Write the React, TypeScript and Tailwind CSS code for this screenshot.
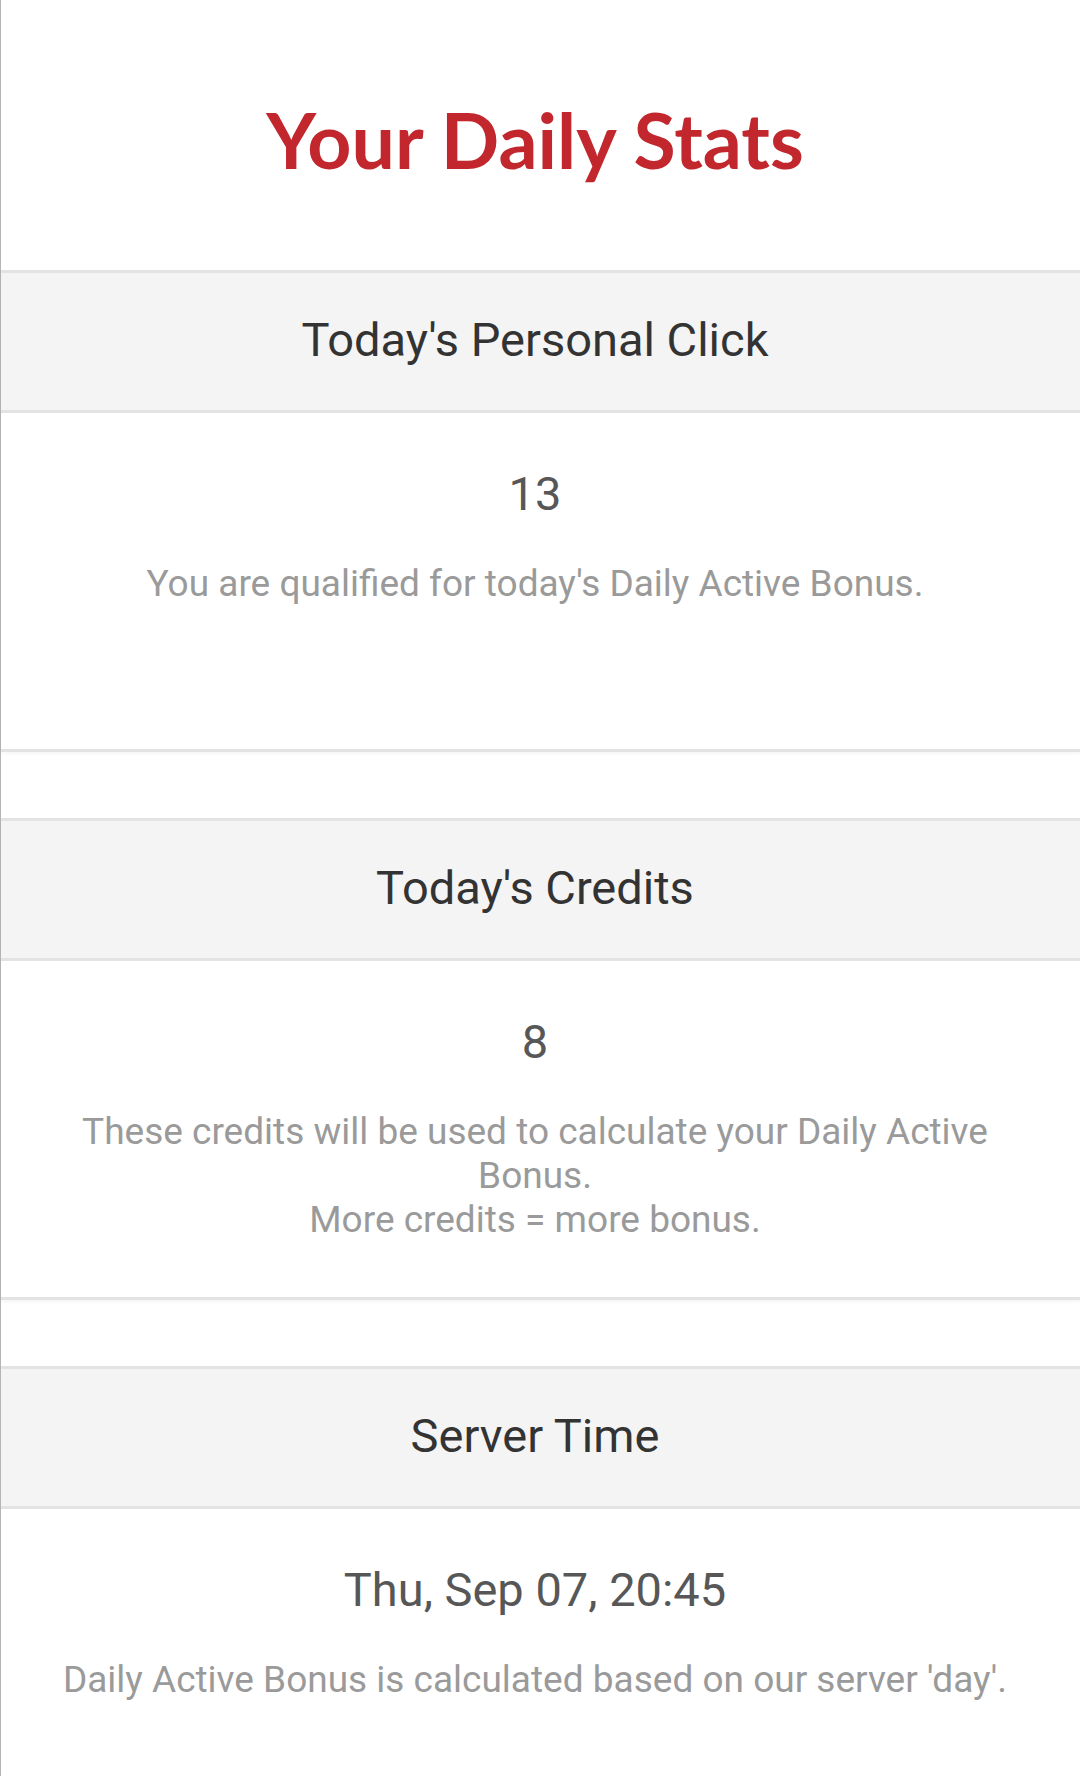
import React from "react";

function Card({ title, value, children, bodyClass }: { title: string; value: string; children: React.ReactNode; bodyClass: string }) {
  return (
    <div className="w-full">
      <div className="border-t-[3px] border-b-[3px] border-[#e3e3e3] bg-[#f4f4f4] pt-[38px] pb-[42px] pr-[11px] text-center text-[47px] leading-[57px] text-[#333333]">
        {title}
      </div>
      <div className={`bg-white pt-[55px] pr-[11px] text-center ${bodyClass}`}>
        <div className="text-[47px] leading-[52px] text-[#575757]">{value}</div>
        <div className="mt-[42px] px-[50px] text-[37px] leading-[44px] text-[#9a9a9a]">{children}</div>
      </div>
    </div>
  );
}

export default function App() {
  return (
    <div className="min-h-[1776px] w-[1080px] border-l border-[#b5b5b5] bg-white" style={{ fontFamily: "Roboto, 'Noto Sans', sans-serif" }}>
      <div className="pt-[92px] pb-[84px] pr-[11px] text-center">
        <h1 className="text-[77px] leading-[94px] font-bold text-[#c1272d]" style={{ fontFamily: "Lato, 'Open Sans', sans-serif" }}>
          Your Daily Stats
        </h1>
      </div>
      <div className="flex flex-col gap-[66px]">
        <div className="border-b-[3px] border-[#e3e3e3] shadow-[0_2px_3px_rgba(0,0,0,0.04)]">
          <Card title="Today's Personal Click" value="13" bodyClass="h-[336px]">
            You are qualified for today's Daily Active Bonus.
          </Card>
        </div>
        <div className="border-b-[3px] border-[#e3e3e3] shadow-[0_2px_3px_rgba(0,0,0,0.04)]">
          <Card title="Today's Credits" value="8" bodyClass="h-[336px]">
            These credits will be used to calculate your Daily Active Bonus.
            <br />
            More credits = more bonus.
          </Card>
        </div>
        <div>
          <Card title="Server Time" value="Thu, Sep 07, 20:45" bodyClass="h-[280px]">
            Daily Active Bonus is calculated based on our server 'day'.
          </Card>
        </div>
      </div>
    </div>
  );
}
